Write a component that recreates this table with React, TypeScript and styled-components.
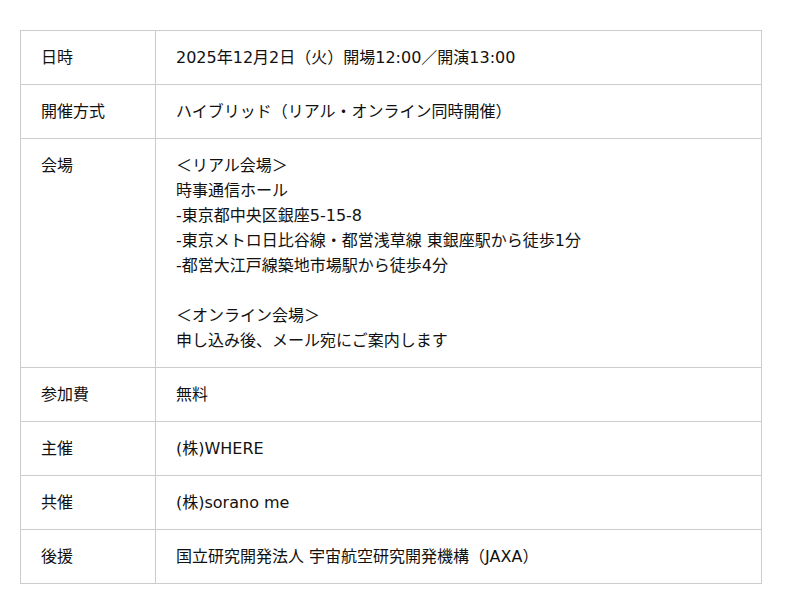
import React from 'react';
import styled, { createGlobalStyle } from 'styled-components';

const rows: { label: string; lines: string[] }[] = [
  { label: '日時', lines: ['2025年12月2日（火）開場12:00／開演13:00'] },
  { label: '開催方式', lines: ['ハイブリッド（リアル・オンライン同時開催）'] },
  {
    label: '会場',
    lines: [
      '＜リアル会場＞',
      '時事通信ホール',
      '-東京都中央区銀座5-15-8',
      '-東京メトロ日比谷線・都営浅草線 東銀座駅から徒歩1分',
      '-都営大江戸線築地市場駅から徒歩4分',
      '',
      '＜オンライン会場＞',
      '申し込み後、メール宛にご案内します',
    ],
  },
  { label: '参加費', lines: ['無料'] },
  { label: '主催', lines: ['(株)WHERE'] },
  { label: '共催', lines: ['(株)sorano me'] },
  { label: '後援', lines: ['国立研究開発法人 宇宙航空研究開発機構（JAXA）'] },
];

const App = () => {
  return (
    <>
      <GlobalStyle />
      <Page>
        <InfoTable>
          <tbody>
            {rows.map((row) => (
              <tr key={row.label}>
                <LabelCell>{row.label}</LabelCell>
                <ValueCell>
                  {row.lines.map((line, i) => (
                    <Line key={i}>{line || '\u00a0'}</Line>
                  ))}
                </ValueCell>
              </tr>
            ))}
          </tbody>
        </InfoTable>
      </Page>
    </>
  );
};

const GlobalStyle = createGlobalStyle`
  html, body {
    margin: 0;
    background: #fff;
  }
  body {
    font-family: "DejaVu Sans", "Noto Sans CJK JP", sans-serif;
    color: #111;
  }
`;

const Page = styled.div`
  padding: 30px 20px;
`;

const InfoTable = styled.table`
  width: 742px;
  border-collapse: collapse;
  font-size: 16px;
  line-height: 25px;
`;

const LabelCell = styled.th`
  width: 94px;
  padding: 14px 20px;
  border: 1px solid #ccc;
  text-align: left;
  vertical-align: top;
  font-weight: normal;
`;

const ValueCell = styled.td`
  padding: 14px 20px;
  border: 1px solid #ccc;
  vertical-align: top;
`;

const Line = styled.div`
  white-space: nowrap;
`;

export default App;
